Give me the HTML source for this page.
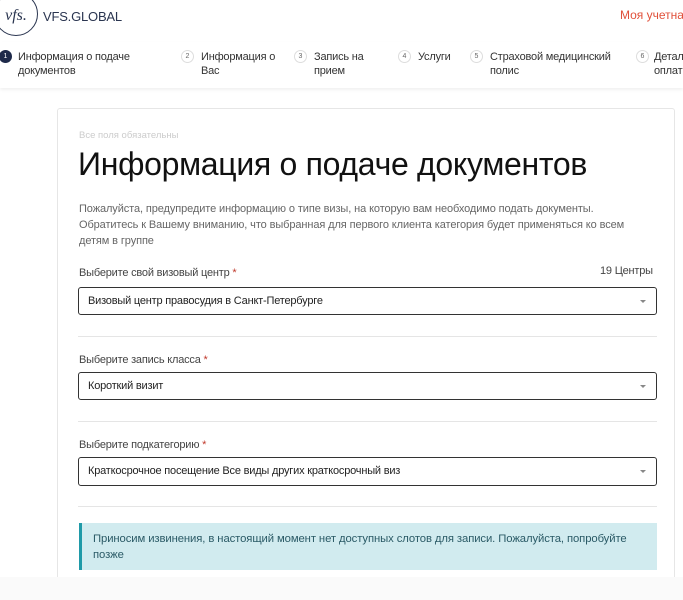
<!DOCTYPE html>
<html><head><meta charset="utf-8"><style>
*{margin:0;padding:0;box-sizing:border-box}
body{width:683px;height:600px;overflow:hidden;background:#fff;font-family:"Liberation Sans",sans-serif;color:#333;position:relative}
.abs{position:absolute;white-space:nowrap}
.logo{left:-6px;top:-8px;width:44px;height:44px;border:1px solid #2a3550;border-radius:50%;font-family:"Liberation Serif",serif;font-style:italic;font-size:16px;color:#2a3550;text-align:center;line-height:46px}
.steps{position:absolute;left:0;top:42px;width:683px;height:46px;box-shadow:0 2px 3px rgba(0,0,0,0.06);background:#fff}
.st{position:absolute;top:8px;font-size:11px;line-height:14px;color:#333;letter-spacing:-0.2px}
.num{position:absolute;top:8px;width:13px;height:13px;border:1px solid #ddd;border-radius:50%;font-size:7px;text-align:center;line-height:11px;color:#666}
.card{position:absolute;left:57px;top:108px;width:618px;height:480px;border:1px solid #e6e6e6;border-radius:3px;background:#fff}
.lbl{font-size:11px;color:#444;letter-spacing:-0.2px}
.lbl b{color:#c0392b;font-weight:normal}
.sel{position:absolute;left:78px;width:579px;height:28px;border:1px solid #333;border-radius:3px;font-size:11px;line-height:26px;padding-left:9px;color:#222;letter-spacing:-0.2px}
.sel:after{content:"";position:absolute;right:10px;top:12px;border-left:3px solid transparent;border-right:3px solid transparent;border-top:3px solid #888}
.hr{position:absolute;left:78px;width:579px;height:1px;background:#e5e5e5}
</style></head><body>
<div class="abs logo">vfs.</div>
<div class="abs" style="left:43px;top:9px;font-size:13px;color:#2a3550;letter-spacing:-0.2px">VFS.GLOBAL</div>
<div class="abs" style="left:620px;top:8px;font-size:12px;color:#e0503a">Моя учетная</div>
<div class="steps">
<div class="num" style="left:-1px;background:#1e2a4a;border-color:#1e2a4a;color:#fff">1</div>
<div class="st" style="left:18px">Информация о подаче<br>документов</div>
<div class="num" style="left:181px">2</div><div class="st" style="left:201px">Информация о<br>Вас</div>
<div class="num" style="left:294px">3</div><div class="st" style="left:314px">Запись на<br>прием</div>
<div class="num" style="left:398px">4</div><div class="st" style="left:418px">Услуги</div>
<div class="num" style="left:470px">5</div><div class="st" style="left:490px">Страховой медицинский<br>полис</div>
<div class="num" style="left:636px">6</div><div class="st" style="left:654px">Детал<br>оплат</div>
</div>
<div class="card"></div>
<div class="abs" style="left:79px;top:130px;font-size:9.5px;color:#ccc">Все поля обязательны</div>
<div class="abs" style="left:78px;top:146px;font-size:32px;color:#111;letter-spacing:-0.3px">Информация о подаче документов</div>
<div class="abs" style="left:79px;top:201px;font-size:11px;line-height:16px;color:#666;letter-spacing:-0.1px">Пожалуйста, предупредите информацию о типе визы, на которую вам необходимо подать документы.<br>Обратитесь к Вашему вниманию, что выбранная для первого клиента категория будет применяться ко всем<br>детям в группе</div>
<div class="abs lbl" style="left:79px;top:267px">Выберите свой визовый центр <b>*</b></div>
<div class="abs lbl" style="left:600px;top:265px">19 Центры</div>
<div class="sel" style="top:287px">Визовый центр правосудия в Санкт-Петербурге</div>
<div class="hr" style="top:336px"></div>
<div class="abs lbl" style="left:79px;top:354px">Выберите запись класса <b>*</b></div>
<div class="sel" style="top:372px">Короткий визит</div>
<div class="hr" style="top:421px"></div>
<div class="abs lbl" style="left:79px;top:439px">Выберите подкатегорию <b>*</b></div>
<div class="sel" style="top:457px;height:29px">Краткосрочное посещение Все виды других краткосрочный виз</div>
<div class="hr" style="top:506px"></div>
<div style="position:absolute;left:79px;top:523px;width:578px;height:47px;background:#d1ebef;border-left:3px solid #1f9aa8;padding:8px 0 0 11px;font-size:11.3px;line-height:16px;color:#2a5a66;letter-spacing:-0.1px">Приносим извинения, в настоящий момент нет доступных слотов для записи. Пожалуйста, попробуйте<br>позже</div>
<div style="position:absolute;left:0;top:577px;width:683px;height:23px;background:#fafafa"></div>
</body></html>
